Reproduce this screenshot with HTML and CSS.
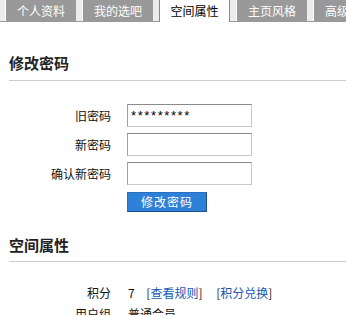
FILE: index.html
```html
<!DOCTYPE html>
<html lang="zh-CN">
<head>
    <meta charset="UTF-8">
    <title>空间属性</title>
    <link rel="stylesheet" href="styles.css">
</head>
<body>
    <div class="tabs">
        <a class="tab">个人资料</a>
        <a class="tab">我的选吧</a>
        <a class="tab active">空间属性</a>
        <a class="tab">主页风格</a>
        <a class="tab">高级设置</a>
    </div>

    <h3 class="section-title">修改密码</h3>
    <div class="form">
        <label class="label">旧密码</label>
        <div class="field"><input type="text" class="input" value="*********"></div>
        <label class="label">新密码</label>
        <div class="field"><input type="text" class="input"></div>
        <label class="label">确认新密码</label>
        <div class="field"><input type="text" class="input"></div>
        <div></div>
        <div class="field"><button class="btn">修改密码</button></div>
    </div>

    <h3 class="section-title second">空间属性</h3>
    <div class="info">
        <span class="label">积分</span>
        <span class="value">7 <span class="brk">[<a href="#">查看规则</a>]</span> <span class="brk">[<a href="#">积分兑换</a>]</span></span>
        <span class="label">用户组</span>
        <span class="value">普通会员</span>
    </div>
</body>
</html>
```

FILE: styles.css
```css
body {
    margin: 0;
    background: #fff;
    color: #111;
    font-family: "Noto Sans CJK SC", "Liberation Sans", sans-serif;
    font-size: 12px;
    overflow: hidden;
}

.tabs {
    display: flex;
    gap: 6px;
    padding-left: 5px;
    height: 21px;
    background: #ececec;
    border-bottom: 1px solid #999;
    white-space: nowrap;
}

.tab {
    flex: none;
    width: 70px;
    height: 21px;
    line-height: 21px;
    text-align: center;
    background: #999;
    color: #fff;
    border-left: 1px solid #fff;
}

.tab.active {
    background: #fff;
    color: #000;
    height: 22px;
    width: 69px;
    border-left: 1px solid #888;
    border-right: 1px solid #888;
}

.section-title {
    margin: 0 0 0 9px;
    padding: 31px 0 7px;
    font-size: 15px;
    line-height: 20px;
    font-weight: bold;
    color: #222;
    border-bottom: 1px solid #ccc;
}

.section-title.second {
    padding-top: 23px;
    padding-bottom: 6px;
}

.form {
    display: grid;
    grid-template-columns: 111px 1fr;
    column-gap: 16px;
    row-gap: 6px;
    margin-top: 23px;
    align-items: center;
}

.form .label {
    text-align: right;
    font-size: 12px;
}

.input {
    display: block;
    box-sizing: border-box;
    width: 125px;
    height: 23px;
    margin: 0;
    padding: 0 3px;
    border: 1px solid #c8c8c8;
    border-top-color: #8a8a8a;
    border-left-color: #a0a0a0;
    font-family: "Liberation Sans", sans-serif;
    font-size: 13px;
    letter-spacing: 1.6px;
    color: #000;
    outline: none;
}

.btn {
    display: block;
    margin-top: 1px;
    width: 80px;
    height: 20px;
    padding: 0;
    background: #2e80d8;
    border: 1px solid #2a6fbf;
    border-right-color: #1d4f8c;
    border-bottom-color: #1d4f8c;
    color: #fff;
    font-family: "Noto Sans CJK SC", sans-serif;
    font-size: 12px;
    letter-spacing: 1px;
    line-height: 18px;
}

.info {
    display: grid;
    grid-template-columns: 111px 1fr;
    column-gap: 17px;
    row-gap: 3px;
    margin-top: 22px;
    line-height: 18px;
}

.info .label {
    text-align: right;
}

.brk {
    margin-left: 9px;
    color: #222;
}

.brk + .brk {
    margin-left: 11px;
}

.brk a {
    color: #1458b8;
    text-decoration: none;
}
```
